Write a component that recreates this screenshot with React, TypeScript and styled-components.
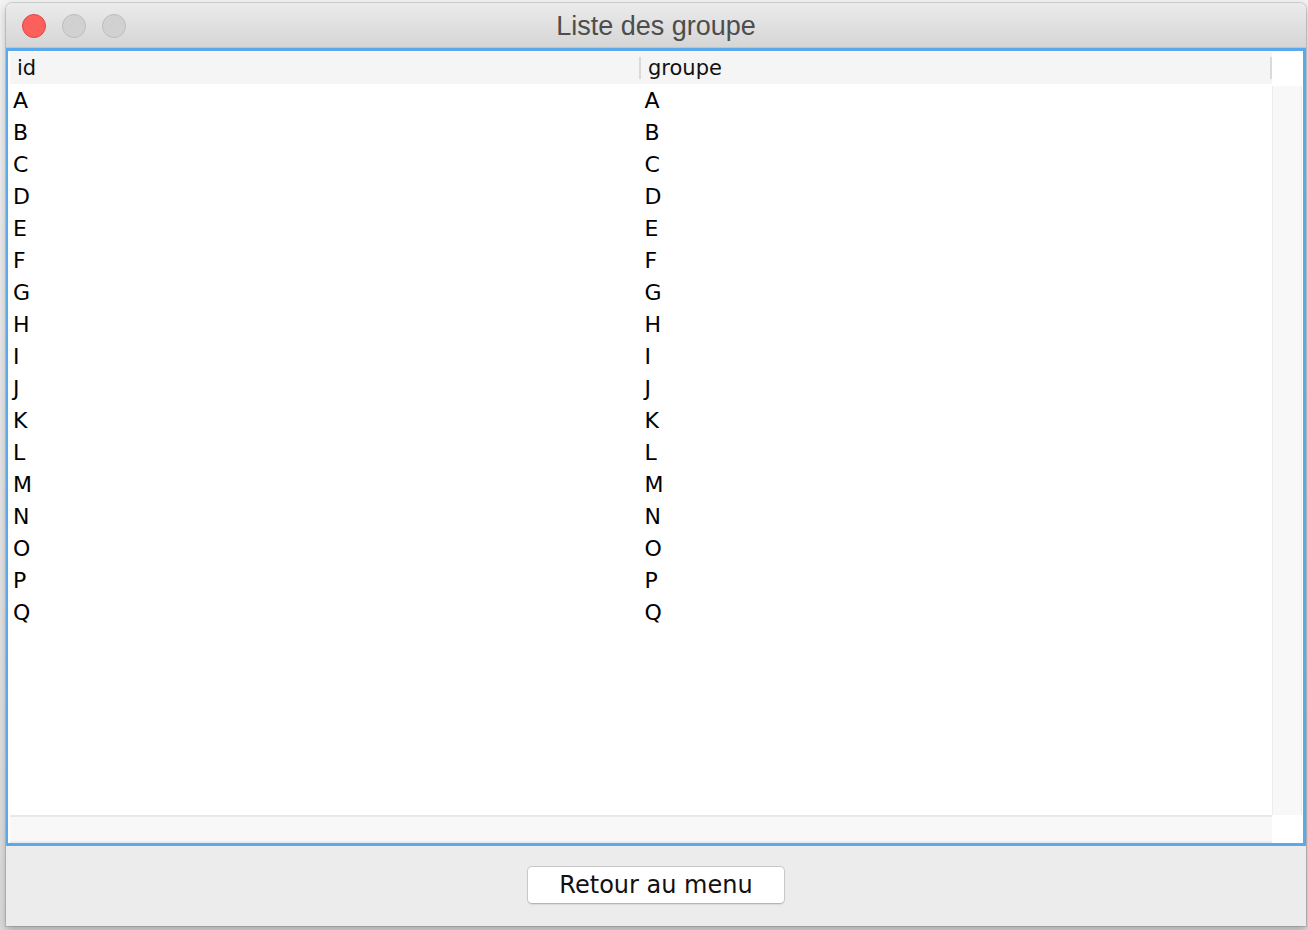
import React from "react";
import styled, { createGlobalStyle } from "styled-components";

const GlobalStyle = createGlobalStyle`
  html, body {
    margin: 0;
    padding: 0;
    background: #e9e9e9;
  }
  body {
    width: 1308px;
    height: 930px;
    overflow: hidden;
    font-family: "DejaVu Sans", "Liberation Sans", sans-serif;
  }
`;

const Desktop = styled.div`
  width: 1308px;
  height: 930px;
  padding: 3px 2px 0 6px;
  box-sizing: border-box;
  background: linear-gradient(#f2f2f2, #dcdcdc);
`;

const Window = styled.div`
  width: 1300px;
  height: 923px;
  display: flex;
  flex-direction: column;
  background: #ececec;
  border-radius: 6px 6px 0 0;
  overflow: hidden;
  box-shadow: 0 0 0 1px rgba(0, 0, 0, 0.12), 0 4px 10px rgba(0, 0, 0, 0.25);
`;

const TitleBar = styled.div`
  height: 44px;
  flex: none;
  display: flex;
  align-items: center;
  position: relative;
  background: linear-gradient(#ebebeb, #d5d5d5);
  border-bottom: 1px solid #c4c4c4;
`;

const Lights = styled.div`
  display: flex;
  gap: 16px;
  padding-left: 16px;
  align-items: center;
  position: absolute;
  left: 0;
  top: 11px;
`;

const Light = styled.span<{ $color: string; $border: string }>`
  width: 22px;
  height: 22px;
  border-radius: 50%;
  background: ${(p) => p.$color};
  border: 1px solid ${(p) => p.$border};
`;

const Title = styled.div`
  flex: 1;
  text-align: center;
  font-family: "Liberation Sans", Arial, sans-serif;
  font-size: 27px;
  color: #4d4d4d;
  padding-top: 2px;
`;

const Content = styled.div`
  flex: none;
  height: 798px;
  box-sizing: border-box;
  border: 3px solid #5aa9ec;
  border-left-width: 2px;
  background: #ffffff;
  padding: 1px 1px 0 1px;
  display: grid;
  grid-template-columns: 1fr 30px;
  grid-template-rows: 32px 1fr 28px;
  overflow: hidden;
`;

const HeaderRow = styled.div`
  display: grid;
  grid-template-columns: 1fr 1fr;
  background: #f5f5f5;
  margin-left: 1px;
`;

const HeaderCell = styled.div`
  display: flex;
  align-items: center;
  font-size: 21px;
  color: #111;
  padding-left: 7px;
  position: relative;
  &::after {
    content: "";
    position: absolute;
    right: 0;
    top: 5px;
    bottom: 5px;
    width: 2px;
    background: #dadada;
  }
`;

const Body = styled.div`
  display: grid;
  grid-template-columns: 1fr 1fr;
  grid-auto-rows: 32px;
  align-content: start;
  min-height: 0;
`;

const Cell = styled.div`
  display: flex;
  align-items: center;
  padding-left: 4px;
  font-size: 22px;
  color: #000;
`;

const VScroll = styled.div`
  background: #f8f8f8;
  border-left: 1px solid #ececec;
  border-right: 1px solid #ececec;
  margin-top: 2px;
`;

const HScroll = styled.div`
  background: #f8f8f8;
  border-top: 2px solid #e8e8e8;
  border-bottom: 2px solid #ececec;
  margin-left: 1px;
`;

const Corner = styled.div`
  background: #ffffff;
`;

const Footer = styled.div`
  flex: 1;
  display: flex;
  justify-content: center;
  align-items: flex-start;
  background: #ececec;
  padding-top: 20px;
`;

const Button = styled.button`
  width: 258px;
  height: 38px;
  background: #ffffff;
  border: 1px solid #c8c8c8;
  border-bottom-color: #b5b5b5;
  border-radius: 5px;
  font-family: "DejaVu Sans", sans-serif;
  font-size: 24px;
  color: #111;
  box-shadow: 0 1px 1px rgba(0, 0, 0, 0.08);
  padding: 0;
  cursor: pointer;
`;

const letters = "ABCDEFGHIJKLMNOPQ".split("");

export default function App() {
  return (
    <>
      <GlobalStyle />
      <Desktop>
        <Window>
          <TitleBar>
            <Lights>
              <Light $color="#fc605c" $border="#df4744" />
              <Light $color="#d1d1d1" $border="#bdbdbd" />
              <Light $color="#d1d1d1" $border="#bdbdbd" />
            </Lights>
            <Title>Liste des groupe</Title>
          </TitleBar>
          <Content>
            <HeaderRow>
              <HeaderCell>id</HeaderCell>
              <HeaderCell>groupe</HeaderCell>
            </HeaderRow>
            <Corner />
            <Body>
              {letters.map((l) => (
                <React.Fragment key={l}>
                  <Cell>{l}</Cell>
                  <Cell>{l}</Cell>
                </React.Fragment>
              ))}
            </Body>
            <VScroll />
            <HScroll />
            <Corner />
          </Content>
          <Footer>
            <Button>Retour au menu</Button>
          </Footer>
        </Window>
      </Desktop>
    </>
  );
}
